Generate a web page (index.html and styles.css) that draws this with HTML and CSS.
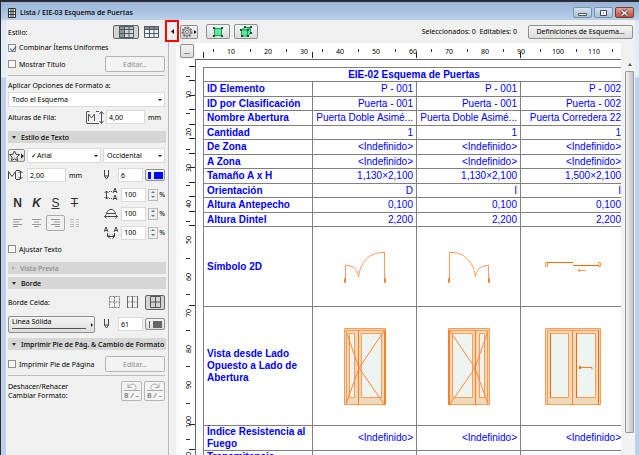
FILE: index.html
```html
<!DOCTYPE html>
<html lang="es">
<head>
  <meta charset="UTF-8">
  <title>Lista / EIE-03 Esquema de Puertas</title>
  <link rel="stylesheet" href="styles.css">
</head>
<body>

<div class="window">
  <header class="titlebar">
    <svg width="8" height="12" viewBox="0 0 8 12"><path d="M.5 1.5h7v9h-7zM3 1.5v9M5 1.5v9M.5 4.5h7M.5 7.5h7" fill="#e4edf6" stroke="#333"/></svg>
    <h1>Lista / EIE-03 Esquema de Puertas</h1>
    <div class="win-buttons">
      <button aria-label="Minimizar"><svg width="9" height="8"><path d="M.5 4.5h8v2h-8z" fill="#fff" stroke="#555"/></svg></button>
      <button aria-label="Maximizar"><svg width="9" height="8"><path d="M1.5 1.5h6v5h-6z" fill="#fff" stroke="#445"/><path d="M4 4h1" stroke="#445"/></svg></button>
      <button class="close" aria-label="Cerrar"><svg width="9" height="8"><path d="M1.5 1.5l6 5M7.5 1.5l-6 5" stroke="#533" stroke-width="3"/><path d="M1.5 1.5l6 5M7.5 1.5l-6 5" stroke="#fff" stroke-width="1.5"/></svg></button>
    </div>
  </header>

  <div class="content">
    <aside class="panel">
      <div class="row style-row">
        <span class="grow">Estilo:</span>
        <button class="btn on wide" aria-label="Filas"><svg width="15" height="12"><path d="M0 0h15v3H0z" fill="#b5bcc2"/><path d="M0 0h5v12H0z" fill="#8b959c"/><path d="M.5.5h14v11H.5zM5.5.5v11M10 .5v11M.5 3.5h14M.5 7.5h14" fill="none" stroke="#4d5a63"/></svg></button>
        <button class="plain" aria-label="Columnas"><svg width="15" height="12"><path d="M0 0h15v4H0z" fill="#7f8b93"/><path d="M.5.5h14v11H.5zM5.5.5v11M10 .5v11M.5 3.5h14M.5 7.5h14" fill="none" stroke="#4d5a63"/></svg></button>
      </div>
      <div class="row check-row">
        <label><input type="checkbox" checked> Combinar Ítems Uniformes</label>
      </div>
      <div class="row title-row">
        <label class="grow"><input type="checkbox"> Mostrar Título</label>
        <button class="btn edit" disabled>Editar...</button>
      </div>
      <hr>
      <label class="row apply-label" for="aplicar">Aplicar Opciones de Formato a:</label>
      <div class="select"><select id="aplicar"><option>Todo el Esquema</option></select></div>
      <div class="row height-row">
        <label class="grow" for="alto-fila">Alturas de Fila:</label>
        <svg width="18" height="13"><path d="M.5 1v11M.5 12.5h10M.5.5h3M2.5 10V3l3 4 3-4v7M10 .5h3M10 12.5h3M15.5 1v11M13.5 3l2-2.500 2 2.500M13.5 10l2 2.500 2-2.500" fill="none" stroke="#555"/></svg>
        <input class="num" id="alto-fila" type="text" value="4,00">
        <span class="unit">mm</span>
      </div>

      <h2><i class="arrow"></i>Estilo de Texto</h2>
      <div class="row font-row">
        <button class="btn star" aria-label="Favoritos"><svg width="16" height="12"><path d="M5.500 1l1.500 3.300 3.500.4-2.600 2.400.7 3.500-3.100-1.800-3.100 1.800.7-3.500L.5 4.700l3.500-.4z" fill="none" stroke="#444"/><path d="M12 3.500v5l3-2.500z" fill="#222"/></svg></button>
        <div class="select grow"><select aria-label="Fuente"><option>✓Arial</option></select></div>
        <div class="select script"><select aria-label="Alfabeto"><option>Occidental</option></select></div>
      </div>
      <div class="row size-row">
        <svg width="15" height="10"><path d="M.5 9V1.500l3.500 5 3.500-5V9M8 .5h4M8 9.500h4M12.500 1v8M10.500 3l2-2 2 2M10.500 7l2 2 2-2" fill="none" stroke="#444"/></svg>
        <input class="num" type="text" value="2,00" aria-label="Altura de texto">
        <span class="unit grow">mm</span>
        <svg width="7" height="10"><path d="M1.500 0v6l2 3 2-3V0M1.500 6h4" fill="none" stroke="#444"/></svg>
        <input class="pen" type="text" value="6" aria-label="Pluma de texto">
        <button class="btn color" aria-label="Color de texto"><i class="ink blue thin"></i><i class="ink blue"></i></button>
      </div>

      <div class="text-grid">
        <div class="letters">
          <button class="plain"><b>N</b></button>
          <button class="plain"><b><em>K</em></b></button>
          <button class="plain"><u>S</u></button>
          <button class="plain"><s>T</s></button>
          <button class="plain" disabled aria-label="Izquierda"><svg width="9" height="8"><path d="M0 .5h9M0 3h6M0 5.500h9M0 7.500h5" stroke="#999"/></svg></button>
          <button class="plain" disabled aria-label="Centro"><svg width="9" height="8"><path d="M0 .5h9M2 3h5M0 5.500h9M2 7.500h5" stroke="#999"/></svg></button>
          <button class="plain framed" disabled aria-label="Derecha"><svg width="9" height="8"><path d="M0 .5h9M3 3h6M0 5.500h9M4 7.500h5" stroke="#999"/></svg></button>
          <button class="plain" disabled aria-label="Justificado"><svg width="9" height="8"><path d="M0 .5h4M6 .5h3M0 3h4M6 3h3M0 5.500h4M6 5.500h3M0 7.500h4M6 7.500h3" stroke="#bbb"/></svg></button>
        </div>
        <div class="percents">
          <div class="row pct">
            <svg width="14" height="13"><path d="M2.500 3v8M.5 5l2-2 2 2M.5 9l2 2 2-2M5 3.500h1M7 3.500h1M5 10.500h1M7 10.500h1M9 5l2-5 2 5M10 3.500h2M9 12l2-5 2 5M10 10.500h2" fill="none" stroke="#444"/></svg>
            <input type="text" value="100" aria-label="Interlineado"><span class="spin"><i></i><i></i></span>%
          </div>
          <div class="row pct">
            <svg width="14" height="13"><path d="M2.500 6.500C4 1 10 1 11.500 6.500zM.5 9.500h13M2.500 7.500l-2 2 2 2M11.500 7.500l2 2-2 2" fill="none" stroke="#444"/></svg>
            <input type="text" value="100" aria-label="Factor de ancho"><span class="spin"><i></i><i></i></span>%
          </div>
          <div class="row pct">
            <svg width="14" height="13"><path d="M0 6l2-5 2 5M1 4.500h2M10 6l2-5 2 5M11 4.500h2M3.500 7v3.500h7V7M6 8.500l-2 2 2 2M8.500 8.500l2 2-2 2" fill="none" stroke="#444"/></svg>
            <input type="text" value="100" aria-label="Espaciado"><span class="spin"><i></i><i></i></span>%
          </div>
        </div>
      </div>
      <div class="row adjust-row">
        <label><input type="checkbox"> Ajustar Texto</label>
      </div>

      <h2 class="closed"><i class="arrow"></i>Vista Previa</h2>
      <h2><i class="arrow"></i>Borde</h2>
      <div class="row border-row">
        <span class="grow">Borde Celda:</span>
        <button class="plain" aria-label="Sin borde"><svg width="11" height="12"><path d="M.5.5h10v11H.5zM5.500.5v11M.5 6h10" fill="none" stroke="#777" stroke-dasharray="2 1"/></svg></button>
        <button class="plain" aria-label="Vertical"><svg width="11" height="12"><path d="M.5.5h10M.5 6h10M.5 11.500h10" stroke="#888" stroke-dasharray="2 1"/><path d="M.5 0v12M5.500 0v12M10.500 0v12" stroke="#666"/></svg></button>
        <button class="btn on cell" aria-label="Todos"><svg width="11" height="12"><path d="M.5.5h10v11H.5zM5.500.5v11M.5 6h10" fill="none" stroke="#555"/></svg></button>
      </div>
      <div class="row line-row">
        <button class="btn line"><span>Línea Sólida</span><i></i></button>
        <svg width="7" height="10"><path d="M1.500 0v6l2 3 2-3V0M1.500 6h4" fill="none" stroke="#444"/></svg>
        <input class="pen" type="text" value="61" aria-label="Pluma de borde">
        <button class="btn color" aria-label="Color de borde"><i class="ink hair"></i><i class="ink"></i></button>
      </div>

      <h2><i class="arrow"></i>Imprimir Pie de Pág. &amp; Cambio de Formato</h2>
      <div class="row footer-row">
        <label class="grow"><input type="checkbox"> Imprimir Pie de Página</label>
        <button class="btn edit" disabled>Editar...</button>
      </div>
      <hr>
      <div class="row undo-row">
        <span class="grow">Deshacer/Rehacer<br>Cambiar Formato:</span>
        <button class="btn undo" disabled aria-label="Deshacer"><svg width="18" height="9"><path d="M5 1.500v4h4M5 5.500c3-5 8-4 8 0 0 2-1 2-2 3M1 8.500h16" fill="none" stroke="#aaa"/></svg><b>B <em>/</em> –</b></button>
        <button class="btn undo" disabled aria-label="Rehacer"><svg width="18" height="9"><path d="M13 1.500v4H9M13 5.500c-3-5-8-4-8 0 0 2 1 2 2 3M1 8.500h16" fill="none" stroke="#aaa"/></svg><b>B <em>/</em> –</b></button>
      </div>
    </aside>

    <div class="splitter">
      <button class="collapse" aria-label="Ocultar panel"><svg width="3" height="5"><path d="M3 0v5L0 2.500z" fill="#111"/></svg></button>
    </div>

    <main>
      <div class="toolbar">
        <button class="btn gear" aria-label="Opciones"><svg width="16" height="12"><circle cx="6" cy="6" r="4.500" fill="none" stroke="#777" stroke-width="2" stroke-dasharray="2 1"/><circle cx="6" cy="6" r="3.500" fill="#ddd" stroke="#777"/><circle cx="6" cy="6" r="1.500" fill="#fff" stroke="#777"/><path d="M13 4v4l2.500-2z" fill="#111"/></svg></button>
        <button class="btn tool" aria-label="Selección en planta"><svg width="10" height="10"><path d="M1.500 1.500h7v7h-7z" fill="#5fe89d" stroke="#1c9a5b"/><path d="M0 0h2v2H0zM8 0h2v2H8zM0 8h2v2H0zM8 8h2v2H8z" fill="#1e4a35"/></svg></button>
        <button class="btn tool" aria-label="Selección en 3D"><svg width="12" height="11"><path d="M1.500 4l3-2.500h6v6l-3 2.500h-6z" fill="#5fe89d" stroke="#1c9a5b"/><path d="M1.500 4h6v6M7.500 4l3-2.500" fill="none" stroke="#1c9a5b"/><path d="M0 3h2v2H0zM4 0h2v2H4zM10 0h2v2h-2zM7 3h2v2H7zM1 9h2v2H1zM7 9h2v2H7zM10 6h2v2h-2z" fill="#1e4a35"/></svg></button>
        <span class="counts">Seleccionados: 0 &nbsp;Editables: 0</span>
        <button class="btn defs">Definiciones de Esquema...</button>
      </div>

      <div class="canvas">
        <button class="btn more">...</button>
        <svg class="ruler-x" id="ruler-x"></svg>
        <svg class="ruler-y" id="ruler-y"></svg>
        <div class="sheet">
          <table>
            <colgroup><col class="col-label"><col><col><col></colgroup>
            <tr><th class="heading" colspan="4">EIE-02 Esquema de Puertas</th></tr>
            <tr><th>ID Elemento</th><td>P - 001</td><td>P - 001</td><td>P - 002</td></tr>
            <tr><th>ID por Clasificación</th><td>Puerta - 001</td><td>Puerta - 001</td><td>Puerta - 002</td></tr>
            <tr><th>Nombre Abertura</th><td>Puerta Doble Asimé...</td><td>Puerta Doble Asimé...</td><td>Puerta Corredera 22</td></tr>
            <tr><th>Cantidad</th><td>1</td><td>1</td><td>1</td></tr>
            <tr><th>De Zona</th><td>&lt;Indefinido&gt;</td><td>&lt;Indefinido&gt;</td><td>&lt;Indefinido&gt;</td></tr>
            <tr><th>A Zona</th><td>&lt;Indefinido&gt;</td><td>&lt;Indefinido&gt;</td><td>&lt;Indefinido&gt;</td></tr>
            <tr><th>Tamaño A x H</th><td>1,130×2,100</td><td>1,130×2,100</td><td>1,500×2,100</td></tr>
            <tr><th>Orientación</th><td>D</td><td>I</td><td>I</td></tr>
            <tr><th>Altura Antepecho</th><td>0,100</td><td>0,100</td><td>0,100</td></tr>
            <tr><th>Altura Dintel</th><td>2,200</td><td>2,200</td><td>2,200</td></tr>
            <tr class="symbol">
              <th>Símbolo 2D</th>
              <td><svg width="42" height="32"><use href="#planta"/></svg></td>
              <td><svg width="42" height="32"><use href="#planta" transform="translate(42 0) scale(-1 1)"/></svg></td>
              <td><svg width="56" height="32"><path d="M.5 11.500h2v4h-2zM53.500 11.500h2v4h-2z" fill="#fff" stroke="#ff9a55"/><path d="M2 11.500h26M28 14.500h26" stroke="#ff6600"/><path d="M33 19.500h8M35 18l-2 1.500 2 1.500" fill="none" stroke="#ff9a55"/></svg></td>
            </tr>
            <tr class="view">
              <th>Vista desde Lado<br>Opuesto a Lado de<br>Abertura</th>
              <td><svg width="42" height="77"><use href="#puerta"/></svg></td>
              <td><svg width="42" height="77"><use href="#puerta" transform="translate(42 0) scale(-1 1)"/></svg></td>
              <td><svg width="56" height="77"><path d="M.5.5h55v76H.5zM2.500 2.500h51v74h-51z" fill="#efd9b9" stroke="#ff9a55"/><path d="M5.500 5.500h18v64h-18zM31.500 5.500h19v64h-19z" fill="#eef5f1" stroke="#ff9a55"/><path d="M5.500 5v65M31.500 5v65M53.500 2v75" stroke="#ff6600"/><path d="M27.500 2v75" stroke="#ff8433"/><path d="M34 39.500h13v2" fill="none" stroke="#ff7a22"/><path d="M34 38h2v3h-2z" fill="#ff6600"/></svg></td>
            </tr>
            <tr class="tall"><th>Índice Resistencia al<br>Fuego</th><td>&lt;Indefinido&gt;</td><td>&lt;Indefinido&gt;</td><td>&lt;Indefinido&gt;</td></tr>
            <tr class="tall"><th>Transmitancia<br>Térmica</th><td></td><td></td><td></td></tr>
          </table>
        </div>
        <div class="scrollbar"><i class="up"></i><div class="thumb"></div></div>
      </div>
    </main>
  </div>
</div>

<svg width="0" height="0" class="defs-svg">
  <defs>
    <g id="planta" fill="none" stroke="#ff9a55">
      <path d="M1.500 14.500h1C9 14.500 14 19 14.500 26C16 12 25 1.500 38 1.500h2.500"/>
      <path d="M1.500 14v17M40.500 1v30"/>
      <path d="M.5 27.500h1v4h-1zM40.500 27.500h1v4h-1z" stroke="#ff8433"/>
    </g>
    <g id="puerta">
      <path d="M.5.5h41v76H.5zM2.500 2.500h38v74h-38z" fill="#efd9b9" stroke="#ff9a55"/>
      <path d="M5.500 5.500h5v64h-5zM17.500 5.500h20v64h-20z" fill="#eef5f1" stroke="#ff9a55"/>
      <path d="M2 3l13 37L2 76M40 3L15 40l25 36" fill="none" stroke="#ff8433"/>
      <path d="M14.500 2v75" stroke="#ff7a22"/>
      <path d="M41 2v75" stroke="#ff6600"/>
    </g>
  </defs>
</svg>

<script>
  // 10 mm = 36.25 px
  const paso = 36.25;
  const columnas = [8, 117, 221, 325];
  const filas = [7, 21, 36, 50, 65, 79, 94, 108, 123, 137, 152, 166, 246, 365, 390];

  const reglaX = document.getElementById('ruler-x');
  const reglaY = document.getElementById('ruler-y');
  const ancho = reglaX.getBoundingClientRect().width;
  const alto = reglaY.getBoundingClientRect().height;

  let x = '';
  for (let i = 1; i * paso < ancho + 18; i++) {
    const px = Math.round(i * paso);
    if (px + 8 < ancho) x += `<text x="${px}" y="11">${i * 10}</text>`;
    x += `<path d="M${px - 18}.5 6v3"/>`;
  }
  columnas.forEach(c => x += `<path class="mark" d="M${c}.5 9v6"/>`);
  reglaX.innerHTML = x;

  let y = '';
  for (let i = 1; i * paso < alto + 18; i++) {
    const py = Math.round(i * paso);
    y += `<text transform="translate(11 ${py}) rotate(-90)">${i * 10}</text>`;
    y += `<path d="M6 ${py - 19}.5h4"/>`;
  }
  filas.forEach(f => y += `<path class="mark" d="M9 ${f}.5h6"/>`);
  reglaY.innerHTML = y;
</script>

</body>
</html>
```

FILE: styles.css
```css
* {
  box-sizing: border-box;
}
body {
  margin: 0;
  height: 100vh;
  overflow: hidden;
  background: #2b2b33;
  font: 7px/9px "Noto Sans", sans-serif;
  color: #000;
}
svg {
  display: block;
  flex: none;
}
button, input, select {
  font: inherit;
  color: inherit;
  margin: 0;
}
button {
  display: flex;
  align-items: center;
  justify-content: center;
  padding: 0;
}
.window {
  display: flex;
  flex-direction: column;
  height: 100vh;
  padding: 0 4px 0 5px;
  border-top: 2px solid #2b2b33;
  border-left: 1px solid #2b2b33;
  background: linear-gradient(#d9e6f4, #e6eff9 75px, #b9d1ea 76px);
}

/* Barra de título */
.titlebar {
  display: flex;
  align-items: center;
  gap: 4px;
  height: 18px;
  flex: none;
  margin: 0 -4px 0 -5px;
  padding: 3px 5px 0 7px;
  background: linear-gradient(#98b5d5, #b8d0ea);
}
.titlebar h1 {
  flex: 1;
  margin: 0;
  font-size: 7px;
  font-weight: 500;
  line-height: 12px;
}
.win-buttons {
  display: flex;
  gap: 2px;
}
.win-buttons button {
  width: 19px;
  height: 11px;
  border: 1px solid #7b93ad;
  border-radius: 2px;
  background: linear-gradient(#d5e2f0, #a9c0d9);
}
.win-buttons .close {
  border-color: #7d3a33;
  background: linear-gradient(#e0a196, #c0503c);
}
.content {
  flex: 1;
  display: flex;
  min-height: 0;
  background: #f0f0f0;
}

/* Controles comunes */
.btn {
  border: 1px solid #8f8f8f;
  border-radius: 2px;
  background: linear-gradient(#f4f4f4, #dcdcdc);
  white-space: nowrap;
}
.btn:disabled {
  border-color: #b5b5b5;
  background: #f3f3f3;
  color: #8c8c8c;
}
.btn.on {
  border: 1px solid #666;
  background: #d4d4d4;
}
.plain {
  border: 0;
  background: none;
}
.grow {
  flex: 1;
}
.row {
  display: flex;
  align-items: center;
  white-space: nowrap;
}
label {
  display: flex;
  align-items: center;
  gap: 3px;
}
input[type="text"] {
  height: 14px;
  padding: 0 2px;
  border: 1px solid #dadada;
  background: #fff;
}
input[type="checkbox"] {
  appearance: none;
  width: 8px;
  height: 8px;
  border: 1px solid #8e8f8f;
  background: #f6f6f6;
}
input[type="checkbox"]:checked::before {
  content: "";
  display: block;
  width: 3px;
  height: 5px;
  margin-left: 2px;
  border: solid #33559a;
  border-width: 0 1px 1px 0;
  transform: rotate(40deg);
}
.select {
  position: relative;
  height: 15px;
}
.select select {
  appearance: none;
  width: 100%;
  height: 100%;
  padding: 0 3px;
  border: 1px solid #dadada;
  border-radius: 0;
  background: #fff;
}
.select::after {
  content: "";
  position: absolute;
  right: 3px;
  top: 7px;
  border: 2px solid transparent;
  border-top-color: #111;
}
hr {
  flex: none;
  margin: 2px 0;
  border: 0;
  border-top: 1px solid #bcbcbc;
}

/* Panel izquierdo */
.panel {
  display: flex;
  flex-direction: column;
  flex: none;
  width: 163px;
  padding: 4px 3px 0 2px;
  border-right: 1px solid #b8b8b8;
}
.panel > * {
  flex: none;
}
.panel h2 {
  display: flex;
  align-items: center;
  gap: 5px;
  height: 12px;
  margin: 0 -1px 0 0;
  padding-left: 4px;
  background: #d6d6d6;
  font-size: 7px;
  font-weight: 500;
  white-space: nowrap;
}
.arrow {
  border: 2px solid transparent;
  border-top: 3px solid #333;
  border-bottom: 0;
}
.panel h2.closed {
  margin-bottom: 3px;
  color: #8a8a8a;
}
.closed .arrow {
  border: 2px solid transparent;
  border-left: 3px solid #aaa;
  border-right: 0;
}
.style-row {
  height: 16px;
  gap: 5px;
  padding-right: 6px;
}
.btn.wide {
  width: 26px;
  height: 14px;
}
.check-row {
  height: 15px;
}
.title-row, .footer-row {
  height: 18px;
}
.edit {
  width: 60px;
  height: 16px;
}
.apply-label {
  height: 14px;
}
.height-row {
  height: 20px;
  margin-bottom: 4px;
}
.num {
  width: 39px;
}
.unit {
  padding-left: 3px;
}
.height-row .num {
  margin-left: 2px;
}
.height-row .unit {
  width: 20px;
}
.font-row {
  height: 25px;
  gap: 2px;
}
.star {
  width: 17px;
  height: 13px;
}
.script {
  width: 62px;
}
.size-row {
  height: 14px;
}
.size-row .num {
  margin-left: 4px;
}
.pen {
  width: 25px;
  margin: 0 2px 0 8px;
}
.color {
  gap: 3px;
  width: 20px;
  height: 12px;
}
.ink {
  width: 9px;
  height: 7px;
  background: #666;
}
.ink.thin {
  width: 3px;
}
.ink.hair {
  width: 1px;
}
.ink.blue {
  background: #0000ff;
}
.text-grid {
  display: flex;
  justify-content: space-between;
  padding-top: 3px;
}
.letters {
  display: grid;
  grid-template-columns: repeat(4, 19px);
  grid-auto-rows: 20px;
  align-content: end;
  padding-bottom: 9px;
  font: 12px/14px "Liberation Sans", sans-serif;
  color: #333;
}
.letters .framed {
  height: 16px;
  align-self: center;
  border: 1px solid #aaa;
  border-radius: 2px;
}
.pct {
  height: 19px;
}
.pct input {
  width: 25px;
  margin: 0 2px 0 3px;
}
.spin {
  display: flex;
  flex-direction: column;
  justify-content: space-around;
  align-items: center;
  width: 10px;
  height: 12px;
  margin-right: 1px;
  border: 1px solid #bbb;
  background: #eee;
}
.spin i {
  border: 2px solid transparent;
  border-top: 0;
  border-bottom: 2px solid #667799;
}
.spin i + i {
  transform: rotate(180deg);
}
.adjust-row {
  height: 14px;
  margin-bottom: 6px;
}
.border-row {
  height: 26px;
  gap: 7px;
}
.cell {
  width: 20px;
  height: 15px;
}
.line-row {
  height: 18px;
  margin-bottom: 5px;
}
.line {
  position: relative;
  flex: 1;
  height: 17px;
  margin-right: 8px;
  padding: 0 3px;
  justify-content: flex-start;
  align-items: flex-start;
}
.line span {
  flex: 1;
  margin-right: 5px;
  text-align: left;
  padding-bottom: 2px;
  border-bottom: 1px solid #555;
}
.line i {
  position: absolute;
  right: 1px;
  top: 6px;
  border: 2px solid transparent;
  border-left: 2px solid #222;
  border-right: 0;
}
.footer-row {
  margin-top: 5px;
}
.undo-row {
  gap: 2px;
  height: 26px;
}
.undo {
  flex-direction: column;
  width: 21px;
  height: 20px;
}

/* Separador */
.splitter {
  flex: none;
  width: 11px;
  background: linear-gradient(90deg, #f0f0f0 7px, #fafafa 7px);
}
.collapse {
  position: relative;
  left: -4px;
  width: 14px;
  height: 22px;
  border: 2px solid #f00;
  background: #f0f0f0;
}

/* Zona derecha */
main {
  flex: 1;
  min-width: 0;
  display: flex;
  flex-direction: column;
}
.toolbar {
  display: flex;
  align-items: center;
  flex: none;
  height: 23px;
  padding-right: 2px;
}
.gear {
  width: 18px;
  height: 14px;
}
.tool {
  width: 24px;
  height: 15px;
  margin-left: 8px;
}
.tool + .tool {
  margin-left: 4px;
}
.counts {
  flex: 1;
  padding-right: 11px;
  text-align: right;
  white-space: nowrap;
}
.defs {
  width: 105px;
  height: 14px;
}
.canvas {
  flex: 1;
  min-height: 0;
  display: grid;
  grid-template: 16px 1fr / 15px 1fr 14px;
}
.more {
  width: 14px;
  height: 14px;
  margin-top: 1px;
}
.ruler-x, .ruler-y {
  width: 100%;
  height: 100%;
  background: #fff;
  text-anchor: middle;
}
.ruler-x path, .ruler-y path {
  stroke: #333;
}
.ruler-x .mark, .ruler-y .mark {
  stroke: #223;
}
.ruler-y {
  grid-row: 2;
  min-height: 0;
}
.sheet {
  grid-area: 2 / 2;
  min-width: 0;
  min-height: 0;
  overflow: hidden;
  padding: 7px 0 0 7px;
  border-top: 1px solid #666;
  border-left: 1px solid #666;
  background: #fff;
}
table {
  width: 100%;
  min-width: 422px;
  table-layout: fixed;
  border-collapse: collapse;
  font: 10px/12px "Liberation Sans", Arial, sans-serif;
  color: #0000ff;
}
.col-label {
  width: 109px;
}
th, td {
  height: 15px;
  padding: 0 3px;
  border: 1px solid #808080;
  text-align: right;
  white-space: nowrap;
}
tr:nth-child(odd) > * {
  height: 14px;
}
th {
  text-align: left;
}
.heading {
  text-align: center;
}
td svg {
  margin: 0 auto;
}
tr.symbol > * {
  height: 80px;
}
tr.view > * {
  height: 119px;
}
tr.tall > * {
  height: 25px;
}
.scrollbar {
  grid-area: 2 / 3;
  display: flex;
  flex-direction: column;
  align-items: center;
  padding-left: 3px;
  background: #f2f2f2;
}
.up {
  margin: 4px 0 5px;
  border: 2px solid transparent;
  border-top: 0;
  border-bottom: 3px solid #555;
}
.thumb {
  width: 9px;
  height: 94%;
  margin-bottom: 22px;
  border: 1px solid #999;
  border-radius: 1px;
  background: linear-gradient(90deg, #f4f4f4, #c4c4c8);
}
.defs-svg {
  position: absolute;
}
```
